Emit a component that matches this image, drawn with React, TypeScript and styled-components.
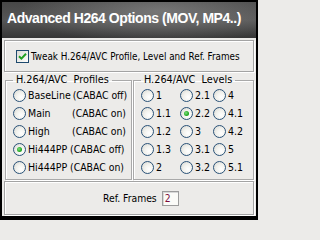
import styled, { createGlobalStyle } from 'styled-components';

const GlobalStyle = createGlobalStyle`
  html, body {
    margin: 0;
    padding: 0;
    background: #ecebe9;
  }
  * {
    box-sizing: border-box;
  }
`;

const Frame = styled.div`
  width: 258px;
  height: 220px;
  border: 2px solid #000;
  border-bottom-width: 4px;
  background: #ecebe9;
  display: flex;
  flex-direction: column;
  font-family: "DejaVu Sans Condensed", "DejaVu Sans", sans-serif;
  font-size: 10.5px;
  color: #000;
  overflow: hidden;
`;

const TitleBar = styled.div`
  height: 36px;
  flex-shrink: 0;
  display: flex;
  align-items: center;
  padding-left: 5px;
  padding-bottom: 5px;
  background:
    radial-gradient(ellipse 55% 90% at 62% 25%, rgba(150, 150, 150, 0.55), rgba(150, 150, 150, 0) 100%),
    linear-gradient(180deg, #474747 0%, #565656 50%, #363636 100%);
  color: #fff;
  font-family: "Liberation Sans", Arial, sans-serif;
  font-weight: bold;
  font-size: 14px;
  letter-spacing: -0.45px;
  white-space: nowrap;
`;

const Body = styled.div`
  flex: 1;
  display: flex;
  flex-direction: column;
  padding: 2px 2px 0 2px;
`;

const Panel = styled.div<{ $height: number }>`
  height: ${(p) => p.$height}px;
  flex-shrink: 0;
  border: 1px solid #a3a3a3;
  box-shadow: inset 1px 1px 0 #fff, 1px 1px 0 #fff;
  display: flex;
  align-items: center;
`;

const CheckPanel = styled(Panel)`
  padding-left: 11px;
  gap: 2px;
  font-size: 9.8px;
`;

const CheckBox = styled.span`
  width: 13px;
  height: 13px;
  border: 1px solid #1f4a6e;
  background: linear-gradient(135deg, #dcdcd6 0%, #f4f4f0 70%, #fff 100%);
  display: flex;
  align-items: center;
  justify-content: center;
`;

const Groups = styled.div`
  display: flex;
  gap: 1px;
  margin: 2px 0 1px 1px;
`;

const Group = styled.fieldset<{ $width: number }>`
  width: ${(p) => p.$width}px;
  margin: 0;
  padding: 0 0 3px 7px;
  border: 1px solid #a9a9a9;
  box-shadow: inset 1px 1px 0 #fff, 1px 1px 0 #fff;
  min-width: 0;
`;

const Legend = styled.legend`
  margin-left: 0;
  padding: 0 3px;
  white-space: pre;
  line-height: 12px;
  font-size: 10.8px;
`;

const ProfileList = styled.div`
  display: flex;
  flex-direction: column;
`;

const LevelGrid = styled.div`
  display: grid;
  grid-template-columns: 39px 33px 1fr;
`;

const Row = styled.div`
  height: 18px;
  display: flex;
  align-items: center;
  gap: 2px;
  white-space: nowrap;
`;

const Radio = styled.span<{ $on?: boolean }>`
  width: 13px;
  height: 13px;
  flex-shrink: 0;
  border-radius: 50%;
  border: 1px solid #2a5278;
  background: radial-gradient(circle at 65% 65%, #ffffff 0%, #f2f2ee 45%, #d4d4ce 100%);
  display: flex;
  align-items: center;
  justify-content: center;
  &::after {
    content: '';
    display: ${(p) => (p.$on ? 'block' : 'none')};
    width: 5px;
    height: 5px;
    border-radius: 50%;
    background: radial-gradient(circle at 40% 40%, #7fe07f 0%, #23a923 60%, #178a17 100%);
  }
`;

const ProfileName = styled.span`
  min-width: 40px;
  flex-shrink: 0;
`;

const ProfileMode = styled.span<{ $shift: number }>`
  margin-left: ${(p) => p.$shift}px;
  font-size: 10.4px;
`;

const RefPanel = styled(Panel)`
  padding-left: 98px;
  gap: 5px;
  font-size: 10.3px;
`;

const RefInput = styled.span`
  width: 17px;
  height: 15px;
  border: 1px solid #9c9c9c;
  box-shadow: inset 1px 1px 0 #d8d8d8;
  background: #fbfbf8;
  color: #7a0a3a;
  padding-left: 2px;
  line-height: 13px;
`;

const profiles = [
  { name: 'BaseLine', mode: '(CABAC off)', shift: 0, on: false },
  { name: 'Main', mode: '(CABAC on)', shift: 2, on: false },
  { name: 'High', mode: '(CABAC on)', shift: 2, on: false },
  { name: 'Hi444PP', mode: '(CABAC off)', shift: 0, on: true },
  { name: 'Hi444PP', mode: '(CABAC on)', shift: 0, on: false },
];

const levels = ['1', '2.1', '4', '1.1', '2.2', '4.1', '1.2', '3', '4.2', '1.3', '3.1', '5', '2', '3.2', '5.1'];

function App() {
  return (
    <>
      <GlobalStyle />
      <Frame>
        <TitleBar>Advanced H264 Options (MOV, MP4..)</TitleBar>
        <Body>
          <CheckPanel $height={32}>
            <CheckBox>
              <svg width="9" height="9" viewBox="0 0 9 9">
                <path d="M1 4.2 L3.4 6.6 L8 1.8" fill="none" stroke="#21a121" strokeWidth="2" />
              </svg>
            </CheckBox>
            <span>Tweak H.264/AVC Profile, Level and Ref. Frames</span>
          </CheckPanel>
          <Groups>
            <Group $width={127}>
              <Legend>{'H.264/AVC  Profiles'}</Legend>
              <ProfileList>
                {profiles.map((p, i) => (
                  <Row key={i}>
                    <Radio $on={p.on} />
                    <ProfileName>{p.name}</ProfileName>
                    <ProfileMode $shift={p.shift}>{p.mode}</ProfileMode>
                  </Row>
                ))}
              </ProfileList>
            </Group>
            <Group $width={121}>
              <Legend>{'H.264/AVC  Levels'}</Legend>
              <LevelGrid>
                {levels.map((l) => (
                  <Row key={l}>
                    <Radio $on={l === '2.2'} />
                    <span>{l}</span>
                  </Row>
                ))}
              </LevelGrid>
            </Group>
          </Groups>
          <RefPanel $height={34}>
            <span>Ref. Frames</span>
            <RefInput>2</RefInput>
          </RefPanel>
        </Body>
      </Frame>
    </>
  );
}

export default App;
